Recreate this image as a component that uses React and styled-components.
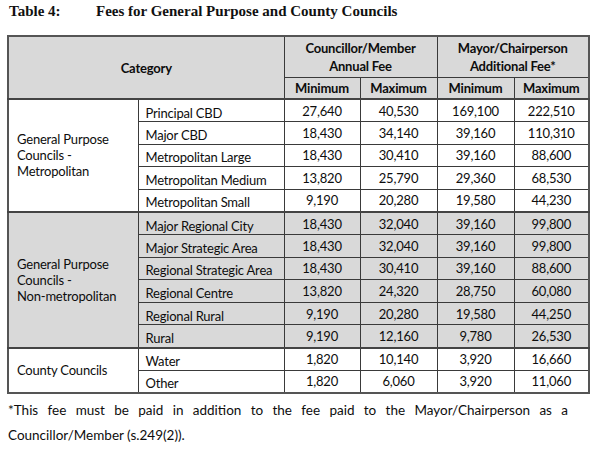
import React from "react";
import styled, { createGlobalStyle } from "styled-components";

const GlobalStyle = createGlobalStyle`
  body {
    margin: 0;
    background: #ffffff;
    color: #111111;
  }
`;

const groups = [
  {
    name: ["General Purpose", "Councils -", "Metropolitan"],
    shaded: false,
    rows: [
      ["Principal CBD", "27,640", "40,530", "169,100", "222,510"],
      ["Major CBD", "18,430", "34,140", "39,160", "110,310"],
      ["Metropolitan Large", "18,430", "30,410", "39,160", "88,600"],
      ["Metropolitan Medium", "13,820", "25,790", "29,360", "68,530"],
      ["Metropolitan Small", "9,190", "20,280", "19,580", "44,230"],
    ],
  },
  {
    name: ["General Purpose", "Councils -", "Non-metropolitan"],
    shaded: true,
    rows: [
      ["Major Regional City", "18,430", "32,040", "39,160", "99,800"],
      ["Major Strategic Area", "18,430", "32,040", "39,160", "99,800"],
      ["Regional Strategic Area", "18,430", "30,410", "39,160", "88,600"],
      ["Regional Centre", "13,820", "24,320", "28,750", "60,080"],
      ["Regional Rural", "9,190", "20,280", "19,580", "44,250"],
      ["Rural", "9,190", "12,160", "9,780", "26,530"],
    ],
  },
  {
    name: ["County Councils"],
    shaded: false,
    rows: [
      ["Water", "1,820", "10,140", "3,920", "16,660"],
      ["Other", "1,820", "6,060", "3,920", "11,060"],
    ],
  },
];

const App = () => {
  return (
    <Page>
      <GlobalStyle />
      <Title>
        <span className="num">Table 4:</span>
        <span>Fees for General Purpose and County Councils</span>
      </Title>
      <Table>
        <colgroup>
          <col style={{ width: 130 }} />
          <col style={{ width: 146 }} />
          <col style={{ width: 76 }} />
          <col style={{ width: 77 }} />
          <col style={{ width: 77 }} />
          <col style={{ width: 75 }} />
        </colgroup>
        <thead>
          <tr className="top">
            <HeadCell rowSpan={2} colSpan={2}>
              Category
            </HeadCell>
            <HeadCell colSpan={2}>
              Councillor/Member
              <br />
              Annual Fee
            </HeadCell>
            <HeadCell colSpan={2}>
              Mayor/Chairperson
              <br />
              Additional Fee*
            </HeadCell>
          </tr>
          <tr className="sub">
            <HeadCell>Minimum</HeadCell>
            <HeadCell>Maximum</HeadCell>
            <HeadCell>Minimum</HeadCell>
            <HeadCell>Maximum</HeadCell>
          </tr>
        </thead>
        {groups.map((g, gi) => (
          <GroupBody key={gi} $shaded={g.shaded}>
            {g.rows.map((r, ri) => (
              <tr key={ri}>
                {ri === 0 && (
                  <GroupCell rowSpan={g.rows.length}>
                    {g.name.map((line, li) => (
                      <div key={li}>{line}</div>
                    ))}
                  </GroupCell>
                )}
                <LabelCell>{r[0]}</LabelCell>
                {r.slice(1).map((v, vi) => (
                  <NumCell key={vi}>{v}</NumCell>
                ))}
              </tr>
            ))}
          </GroupBody>
        ))}
      </Table>
      <Note>
        *This fee must be paid in addition to the fee paid to the Mayor/Chairperson as a
        Councillor/Member (s.249(2)).
      </Note>
    </Page>
  );
};

const Page = styled.div`
  width: 605px;
  height: 462px;
  padding: 2px 0 0 7px;
  box-sizing: border-box;
  font-family: Lato, "Liberation Sans", sans-serif;
  font-size: 13px;
  letter-spacing: -0.2px;
  color: #0d0d0d;
`;

const Title = styled.div`
  display: flex;
  font-family: "Liberation Serif", serif;
  font-weight: 700;
  font-size: 15px;
  line-height: 19px;
  letter-spacing: 0;
  padding-left: 2px;
  color: #111;
  .num {
    width: 87px;
  }
`;

const Table = styled.table`
  margin-top: 14px;
  width: 581px;
  table-layout: fixed;
  border-collapse: collapse;
  border: 2px solid #555;
  tr.top {
    height: 41px;
  }
  tr.sub {
    height: 22px;
  }
`;

const HeadCell = styled.th`
  background: #d9d9d9;
  border: 1px solid #3a3a3a;
  font-weight: 700;
  text-align: center;
  vertical-align: middle;
  line-height: 18px;
  padding: 0;
  tr.sub & {
    padding-top: 1px;
  }
`;

const GroupBody = styled.tbody`
  background: ${(p) => (p.$shaded ? "#d9d9d9" : "#ffffff")};
  border-top: 2px solid #444;
  tr {
    height: 22.6px;
  }
`;

const GroupCell = styled.td`
  border: 1px solid #3a3a3a;
  padding: 0 0 0 8px;
  line-height: 16px;
  vertical-align: middle;
`;

const LabelCell = styled.td`
  border: 1px solid #3a3a3a;
  padding: 4px 0 0 7px;
  line-height: 16px;
  white-space: nowrap;
`;

const NumCell = styled.td`
  border: 1px solid #3a3a3a;
  text-align: center;
  padding: 0;
  line-height: 16px;
`;

const Note = styled.p`
  margin: 4px 0 0 1px;
  width: 560px;
  text-align: justify;
  text-align-last: left;
  line-height: 25px;
  font-size: 13.5px;
  letter-spacing: 0;
`;

export default App;
